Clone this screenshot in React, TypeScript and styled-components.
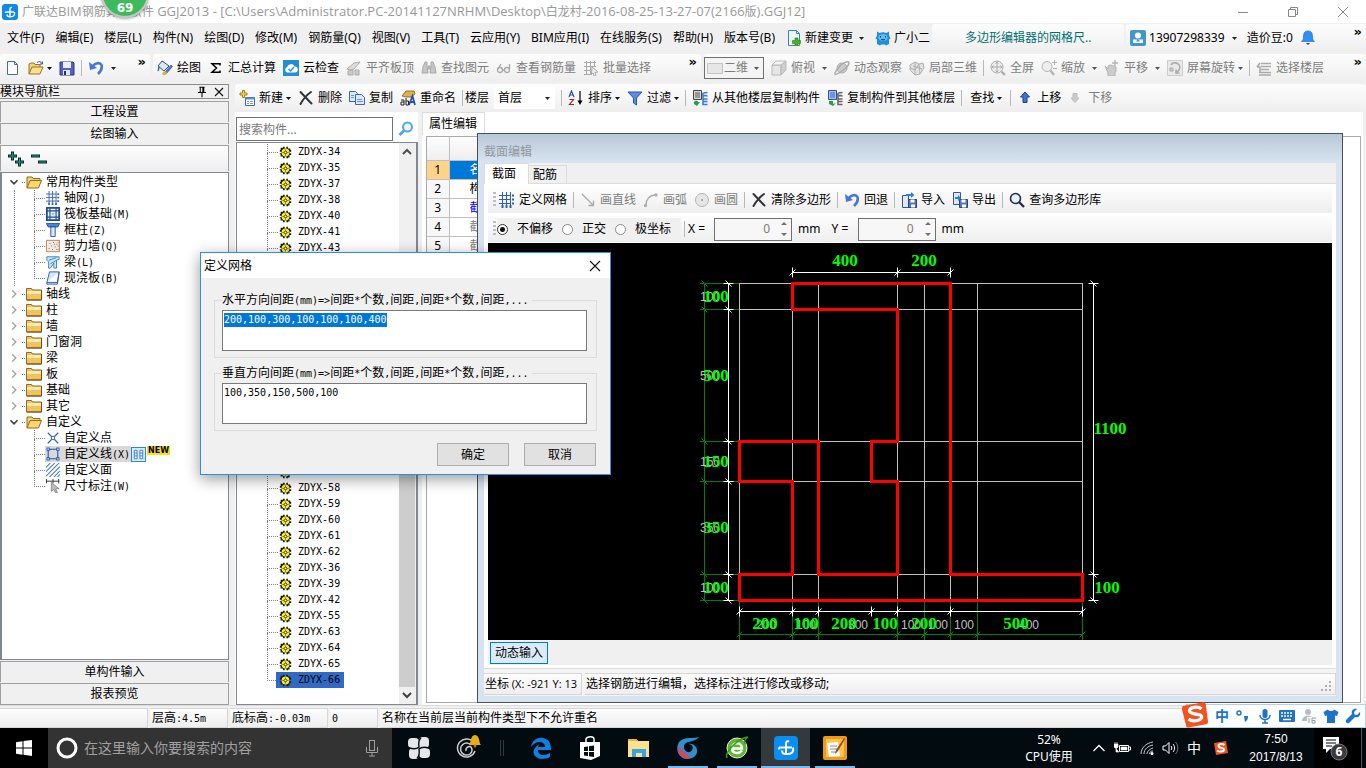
import React, { useEffect, useRef } from 'react';
import styled, { createGlobalStyle, css } from 'styled-components';

const ui = '"Noto Sans", "Noto Sans CJK SC", sans-serif';
const song = '"DejaVu Sans Mono", "Noto Sans CJK SC", monospace';

const GlobalStyle = createGlobalStyle`
  * { box-sizing: border-box; }
  html, body { margin: 0; background: #f0f0f0; }
  body { font: 12px/16px ${ui}; color: #000; overflow: hidden; }
  button, input, select, textarea { font: inherit; color: inherit; margin: 0; }
  button { background: none; border: 0; padding: 0; white-space: nowrap; }
  ul { list-style: none; margin: 0; padding: 0; }
  svg { display: block; flex: none; }
  a { color: inherit; text-decoration: none; }
`;

/* ---------- text with half-width Latin runs ---------- */

const Latin = styled.span<{ $size: number; $mono?: boolean }>`
  font-size: ${(p) => p.$size}px;
  font-family: ${(p) => (p.$mono ? song : '"Open Sans", sans-serif')};
`;

function Mixed({ text, size = 10, mono = true }: { text: string; size?: number; mono?: boolean }) {
  const runs = text.split(/([\x20-\x7e]+)/).filter(Boolean);
  return (
    <span>
      {runs.map((run, i) =>
        /^[\x20-\x7e]/.test(run) ? (
          <Latin key={i} $size={size} $mono={mono}>{run}</Latin>
        ) : (
          <React.Fragment key={i}>{run}</React.Fragment>
        )
      )}
    </span>
  );
}

/* ---------- icons ---------- */

const drawings: Record<string, React.ReactNode> = {
  app: (
    <>
      <rect width="16" height="16" rx="3" fill="#0f8ae6" />
      <path d="M10 3.500C8.500 3 8 4 8 5v7.500M3.500 8h8.500M3.500 8v1M12.500 8c.5 3-.5 5-4.500 4.800C5.500 12.800 5 11.500 5 10.500" fill="none" stroke="#fff" strokeWidth="1.400" />
    </>
  ),
  file: <path d="M2.500 1.500h7l3 3v10h-10zM9.500 1.500v3h3" fill="#fff" stroke="#4a6d8c" />,
  open: (
    <>
      <path d="M1 14V4l2-1h3l1 1.500h5V7" fill="#f3d27c" stroke="#9a7428" />
      <path d="M1 14l3-7h11l-3 7z" fill="#fbdf8c" stroke="#9a7428" />
      <path d="M9 2.500c2-1.500 4-1 5 1M14.500 1.500v2.500h-2.500" fill="none" stroke="#3b5b8a" />
    </>
  ),
  save: (
    <>
      <path d="M1 2h13l1 1v12H1z" fill="#5560c8" stroke="#2c3590" />
      <path d="M4 2h8v6H4z" fill="#eef" />
      <path d="M4 10h7v5H4z" fill="#dfe4fa" />
      <path d="M5 11h2v4H5z" fill="#333" />
    </>
  ),
  undo: (
    <>
      <path d="M5 6c2-3 7-4 8.500-1 1.200 3.500-1.500 7-3.500 9" fill="none" stroke="#4a76d4" strokeWidth="2.600" />
      <path d="M1 2l1 8 7-2z" fill="#4a76d4" />
    </>
  ),
  paint: (
    <>
      <path d="M1 6l4-5 7 5-5 5z" fill="#dfe7f2" stroke="#31527b" />
      <path d="M8 12l6-7 1.500 1.500-6 7z" fill="#4d7fc9" stroke="#25447a" strokeWidth=".6" />
      <path d="M5 14c2-3 4-3 5-1 0 2-4 3-5 1z" fill="#e2a93a" />
      <path d="M1 6c1 0 1 3 0 5" stroke="#2b66b9" fill="none" strokeWidth="1.500" />
    </>
  ),
  sigma: <path d="M12 5.500V3.800H4L8.500 8 4 12.200h8v-1.700" fill="none" stroke="#000" strokeWidth="1.500" />,
  cloud: (
    <>
      <rect width="16" height="16" fill="#1f8fd6" />
      <path d="M4 12.500a3 3 0 010-5.500 4 4 0 017.500-.500 3 3 0 01.500 6z" fill="#fff" />
      <path d="M5.500 9l2 2 3.500-4" fill="none" stroke="#1f8fd6" strokeWidth="1.300" />
    </>
  ),
  slab: (
    <>
      <path d="M1 9l7-6 6-1-6 7-4 1z" fill="#ddd" stroke="#aaa" />
      <path d="M2 11l5-1v5H2zM9 10h4v5H9z" fill="#ccc" stroke="#aaa" />
    </>
  ),
  binoc: (
    <g fill="#c6c6c6" stroke="#a8a8a8">
      <path d="M4 2h2v4l1 7H1l1-6zM10 2h2l2 5 1 6H9l1-7z" />
      <path d="M7 6h2v3H7z" />
    </g>
  ),
  glasses: (
    <g fill="none" stroke="#a8a8a8" strokeWidth="1.300">
      <circle cx="4" cy="10" r="2.500" />
      <circle cx="11" cy="10" r="2.500" />
      <path d="M6.500 10h2M2 9l3-5M13.500 9V4" />
    </g>
  ),
  batch: (
    <g fill="none" stroke="#aaa">
      <path d="M1 2.500h12M1 6.500h12M1 10.500h8M1 14.500h8M3.500 1v14M7.500 1v14M11.500 1v6" />
      <path d="M9 7l6 5-3 .5 1 3-2 .5-1-3-1.500 1z" fill="#eee" />
    </g>
  ),
  rect2d: <path d="M.5 3.500h15v10H.5z" fill="#e6e6e6" stroke="#c4c4c4" />,
  cube: (
    <g fill="#e6e6e6" stroke="#b8b8b8">
      <path d="M1 5h9v10H1z" />
      <path d="M1 5l4-4h10l-5 4z" fill="#f4f4f4" />
      <path d="M10 5l5-4v9l-5 5z" fill="#cfcfcf" />
    </g>
  ),
  orbit: (
    <g stroke="#aaa">
      <circle cx="8" cy="8" r="5" fill="#ccc" />
      <path d="M1 14c1 2 14-7 14-11 0-3-7 0-10 4s-5 6-4 7z" fill="none" strokeWidth="1.500" />
    </g>
  ),
  cubes: (
    <g fill="#e2e2e2" stroke="#b0b0b0">
      <path d="M1 5l5-3 4 2 4-1 1 5-4 6-5 1-5-5z" />
      <path d="M1 8l5 2 4-6M6 10v5M10 4l1 10M6 2l0 8M4 6l9 3" fill="none" />
    </g>
  ),
  full: (
    <g fill="none" stroke="#aaa">
      <circle cx="7" cy="7" r="6" fill="#eee" />
      <path d="M7 2v10M2 7h10M5.500 3.500L7 2l1.500 1.500M5.500 10.500L7 12l1.500-1.500M3.500 5.500L2 7l1.500 1.500M10.500 5.500L12 7l-1.500 1.500" />
      <path d="M11.500 11.500L15 15" strokeWidth="2.200" />
    </g>
  ),
  zoomer: (
    <g fill="none" stroke="#b4b4b4">
      <circle cx="6" cy="6.500" r="5" fill="#eee" />
      <path d="M9.500 10.500L13 15" strokeWidth="2.200" />
      <path d="M11 2.500h5M13.500 0v5M12 8.500h4" />
    </g>
  ),
  hand: (
    <g fill="#ccc" stroke="#b4b4b4">
      <path d="M1 6l3 3v-3l2-1 2 .5 2 .5 2 1v4l-1 2v3H4v-3z" />
      <path d="M11 0v6M8 3h6" fill="none" strokeWidth="1.400" />
    </g>
  ),
  rotate: (
    <g fill="none" stroke="#aaa">
      <path d="M.5.5h15v15H.5z" fill="#e9e9e9" stroke="#ccc" />
      <path d="M4 5a4.500 4.500 0 118 5l-3 3M9 9.500V13h3.500" strokeWidth="1.600" />
      <path d="M3 8h3v3H3z" fill="#ccc" />
    </g>
  ),
  floors: (
    <g fill="none" stroke="#aaa" strokeWidth="1.600">
      <path d="M5 3.500h10M5 6.500h10M5 9.500h8M3 12.500h12M3 15h12" />
      <path d="M1 7l3-4M1 7h3v6" />
    </g>
  ),
  create: (
    <>
      <path d="M3.500.5h2v2.500h2.500v2H5.500v2.500h-2V5H1V3h2.500z" fill="#f6d743" stroke="#a68312" />
      <path d="M6.500 7.500h9v8h-9z" fill="#fff" stroke="#3d66b0" />
      <path d="M6.500 7.500h9v2h-9z" fill="#5d8fe0" />
      <path d="M8 11.500h2M11 11.500h3M8 13.500h2M11 13.500h3" stroke="#7b9bd0" />
    </>
  ),
  del: (
    <path d="M2.500 2c3 3 7 7.500 11 11.500M13 2C10 4 5 9.500 2.500 14" fill="none" stroke="#33333c" strokeWidth="2" strokeLinecap="round" />
  ),
  copy: (
    <g fill="#dce8fb" stroke="#3a66b4">
      <path d="M.5 1.500h6l2 2v8h-8z" />
      <path d="M6.500 4.500h6l3 3v7h-9z" />
      <path d="M8 9.500h5M8 11.500h6M2 5.500h3M2 7.500h3" stroke="#6d93d2" />
    </g>
  ),
  rename: (
    <>
      <path d="M2 6l4-5h8l1 3-4 3H6z" fill="#e2b04c" stroke="#7d5a1b" strokeWidth=".8" />
      <path d="M9 15l3.500-9L15 15M10.500 12h4" fill="none" stroke="#2850a8" strokeWidth="1.800" />
      <path d="M1 10h3v5H1v-3h3M6 8v7h2.500v-4H6" fill="none" stroke="#222" />
    </>
  ),
  sort: (
    <>
      <path d="M1 7l2.500-6L6 7M2 5h3" fill="none" stroke="#2952a3" strokeWidth="1.200" />
      <path d="M1.500 9.500h4l-4 5h4.500" fill="none" stroke="#a32929" strokeWidth="1.200" />
      <path d="M12 1v12" stroke="#000" strokeWidth="1.200" />
      <path d="M9.500 10.500h5L12 15z" />
    </>
  ),
  filter: <path d="M1 2h14l-5.500 6v7l-3-2V8z" fill="#5d8be0" stroke="#2a55ac" />,
  copyFrom: (
    <>
      <path d="M1.500.5h8v9h-8z" fill="#d8d8d8" stroke="#444" />
      <path d="M3 3h5M3 5h5M3 7h5" stroke="#555" />
      <path d="M2 12c2-2 4-1 4 0h2l-3 4-3-2z" fill="#24a148" />
      <path d="M15.500 2.500c-5 0-5 1-4.500 3 3 0 4.500.5 4.500 0M11 5v4h4.500M11 9v5.500h4.500M11 11.500h4.500" fill="none" stroke="#3b78d6" strokeWidth="1.600" />
    </>
  ),
  copyTo: (
    <>
      <path d="M1.500.5h8v9h-8z" fill="#a9c6f2" stroke="#2b4f9a" />
      <path d="M3 3h5M3 5h5M3 7h5" stroke="#2b62bb" />
      <path d="M2 11l4 0 0 3 3-1-3 3-4-2z" fill="#24a148" />
      <path d="M15.500 2.500c-5 0-5 1-4.500 3 3 0 4.500.5 4.500 0M11 5v4h4.500M11 9v5.500h4.500M11 11.500h4.500" fill="none" stroke="#666" strokeWidth="1.600" />
    </>
  ),
  up: <path d="M8 2l4.500 5H10v5.500H6V7H3.500z" fill="#3e74dc" stroke="#1b3f94" />,
  down: <path d="M7 12.500l4-4.500H9V3.500H5V8H3z" fill="#ccc" stroke="#bbb" />,
  change: (
    <>
      <path d="M2.500.5h8l3 3v12h-11z" fill="#eaf5ff" stroke="#3a86b8" />
      <path d="M10.500.5v3h3" fill="none" stroke="#3a86b8" />
      <path d="M9 8h3v2.500h2.500v3H12V16H9v-2.500H6.500v-3H9z" fill="#4caf1f" stroke="#2c7d0c" strokeWidth=".6" />
    </>
  ),
  robot: (
    <>
      <path d="M2 1.500l2.500 1.500q3.500-1.500 7 0L14 1.500v4l1.500 3-1.500 1v4.500l-3 1.500-1.500-1h-3l-1.500 1-3-1.500V9.500l-1.500-1L2 5.500z" fill="#1f8fdc" />
      <ellipse cx="8" cy="7.500" rx="4.500" ry="3.300" fill="#5cc0fb" />
      <path d="M5.500 6v1.500M10.500 6v1.500M6 9.200c1 .8 3 .8 4 0" stroke="#0b3b66" fill="none" />
    </>
  ),
  account: (
    <>
      <rect width="16" height="16" rx="2" fill="#3f97cc" />
      <circle cx="8" cy="5.500" r="3" fill="#fff" />
      <path d="M3 13V9.500h10V13z" fill="#fff" />
      <path d="M8 8.500l2 3H6z" fill="#3f97cc" />
    </>
  ),
  bell: (
    <>
      <path d="M8 1c4 0 4.500 3 4.500 6 0 2 .5 3 2 4.500h-13C3 10 3.500 9 3.500 7c0-3 .5-6 4.500-6z" fill="#2f8ff5" stroke="#1262bd" strokeWidth=".6" />
      <path d="M6 13h4l-2 2z" fill="#124a8c" />
    </>
  ),
  grid: (
    <g stroke="#2f5fb3" fill="none">
      <path d="M0 3.500h12M0 7.500h12M0 11.500h12M3.500 0v13M7.500 0v13M11.500 0v13" />
      <path d="M13 3.500h2M13 7.500h2M13 11.500h2M3.500 13v3M7.500 13v3M11.500 13v3" strokeWidth="2" />
    </g>
  ),
  raft: (
    <>
      <rect x="1" y="1" width="14" height="14" fill="#eaf2fc" stroke="#1e4e8c" strokeWidth="2" />
      <path d="M4.500 4.500h7v7h-7zM4.500 1v3.500M11.500 1v3.500M4.500 11.500V15M11.500 11.500V15M1 4.500h3.500M1 11.500h3.500M11.500 4.500H15M11.500 11.500H15" fill="none" stroke="#1e4e8c" strokeWidth="1.300" />
      <path d="M6.500 6.500h3v3h-3z" fill="#a9c6ea" />
    </>
  ),
  column: (
    <>
      <path d="M.5.500h15l-2 4h-11z" fill="#4c84d8" stroke="#1d4795" />
      <path d="M5.500 4.500h5v11h-5z" fill="#dce9fb" stroke="#1d4795" />
    </>
  ),
  shear: (
    <>
      <path d="M.5 1.500h15v13H.5z" fill="#f1e9e2" stroke="#b07a52" />
      <path d="M4 5h1M8 4h1M12 6h1M6 8h1M10 9h1M3 11h1M7 12h1M12 12h1M9 6h1" stroke="#555" />
      <path d="M14 3v10" stroke="#e18a35" strokeDasharray="2 2" />
    </>
  ),
  beam: (
    <>
      <path d="M1 2h14v3l-3 1v9H9V9L5 15H3V8L1 6z" fill="#cfe6fb" stroke="#2e7cc0" />
      <path d="M3 6l9-3M5 10l7-4" stroke="#2e7cc0" />
    </>
  ),
  plate: <path d="M4 1h11l-2 12H1zM1 13v2h12l2-14" fill="#d8e8fd" stroke="#1f4fa8" />,
  folder: (
    <>
      <path d="M.5 2.500h5l1 1.500h9v10H.5z" fill="#f2c35a" stroke="#8c6a2a" />
      <path d="M1 5h14v3H1z" fill="#fde9ad" />
      <path d="M15.500 4v10H1" fill="none" stroke="#6b4e18" />
    </>
  ),
  folderOpen: (
    <>
      <path d="M1 14V3h5l1 1.500h7V7" fill="#f3d27c" stroke="#8c6a2a" />
      <path d="M1 14l3-7.500h11.500L12.500 14z" fill="#fbd868" stroke="#8c6a2a" />
    </>
  ),
  point: (
    <>
      <path d="M2 2l12 12M14 2L2 14" stroke="#2f5fb3" strokeWidth="1.300" />
      <circle cx="8" cy="8" r="2" fill="#fff" stroke="#2f5fb3" />
    </>
  ),
  polyline: (
    <g fill="none" stroke="#1f4fa8" strokeWidth="1.200">
      <path d="M2.500 2.500h11v11h-11z" />
      <path d="M1 1h3v3H1zM12 1h3v3h-3zM1 12h3v3H1zM12 12h3v3h-3z" fill="#9dc0f0" strokeWidth=".8" />
    </g>
  ),
  hatch: <path d="M0 5l5-5M0 10L10 0M0 15L15 0M4 16L16 4M9 16l7-7M13 16l3-3" stroke="#3b72d0" strokeWidth="1.200" />,
  dimension: (
    <>
      <path d="M0 2.500h15M.5 0v5M8 0v5M14.500 0v5" stroke="#222" fill="none" />
      <path d="M6 4l9 7-4 .5 2 4-2 .5-2-4-3 2z" fill="#bbb" stroke="#666" strokeWidth=".7" />
    </>
  ),
  table: (
    <>
      <rect x=".5" y=".5" width="15" height="15" fill="#d7ecff" stroke="#2f7cc4" />
      <path d="M3.500 3.500h3v9h-3zM9.500 3.500h3v9h-3zM3.500 6.500h3M3.500 9.500h3M9.500 6.500h3M9.500 9.500h3" fill="#fff" stroke="#2f7cc4" />
    </>
  ),
  gear: (
    <>
      <path d="M5 1h2v2h2V1h2v2h3v2h1v2h-2v2h2v2h-2v3h-2v1H9v-2H7v2H5v-2H2v-3H1V9h2V7H1V5h1V2h3z" fill="#1a1a10" />
      <circle cx="8" cy="8" r="4.800" fill="#f4ee2a" />
      <path d="M8 4v8M4 8h8" stroke="#6b6810" strokeWidth=".8" />
      <circle cx="8" cy="8" r="1.600" fill="#fff" stroke="#222" />
    </>
  ),
  find: (
    <g fill="none" stroke="#5aa5e0">
      <circle cx="9.500" cy="6" r="4.500" strokeWidth="2" fill="#eaf6ff" />
      <path d="M6 9.500L1.500 14" strokeWidth="3" />
    </g>
  ),
  query: (
    <g fill="none" stroke="#20304a">
      <circle cx="6.500" cy="6.500" r="5" strokeWidth="1.600" fill="#e5f1fc" />
      <path d="M10 10l5 5" strokeWidth="2.400" />
    </g>
  ),
  line: <path d="M2 2l11 11M8.500 13.500h5v-5" fill="none" stroke="#aaa" strokeWidth="1.300" />,
  arc: (
    <g fill="none" stroke="#aaa" strokeWidth="1.300">
      <path d="M3 13C3 7 7 3 12 3" />
      <circle cx="2.500" cy="13.500" r="1" />
      <circle cx="13" cy="3" r="1" />
    </g>
  ),
  circle: (
    <>
      <circle cx="8" cy="8" r="6.500" fill="#e6e6e6" stroke="#b4b4b4" />
      <circle cx="8" cy="8" r="1" fill="#999" />
    </>
  ),
  importIcon: (
    <>
      <path d="M1.500 3.500h6v12h-6z" fill="#dfe8f7" stroke="#34568f" />
      <path d="M7.500 7.500h8v8h-8z" fill="#5374c2" stroke="#27427f" />
      <path d="M9.500 7.500h4v3h-4zM10 12.500h4v3h-4z" fill="#fff" />
      <path d="M5 2h5V0l3.500 3L10 6V4H5z" fill="#2f7fd6" />
    </>
  ),
  exportIcon: (
    <>
      <path d="M1.500.500h7v12h-7z" fill="#dfe8f7" stroke="#34568f" />
      <path d="M7.500 7.500h8v8h-8z" fill="#5374c2" stroke="#27427f" />
      <path d="M9.500 7.500h4v3h-4zM10 12.500h4v3h-4z" fill="#fff" />
      <path d="M3 5h3V3l3 3-3 3V7H3z" fill="#2f7fd6" />
    </>
  ),
  chevDown: <path d="M4 6l4 4 4-4" fill="none" stroke="#404040" strokeWidth="2" />,
  chevUp: <path d="M4 10l4-4 4 4" fill="none" stroke="#505050" strokeWidth="2" />,
  chevRight: <path d="M6 4l4 4-4 4" fill="none" stroke="#a0a0a0" strokeWidth="1.600" />,
  plusPlus: (
    <g stroke="#0b2b2b" strokeWidth="3">
      <path d="M0 5h9M4.500.5v9M7 11h9M11.500 6.500v9" />
      <path d="M1 5h7M4.500 1.500v7M8 11h7M11.500 7.500v7" stroke="#1a9c8e" strokeWidth="1" />
    </g>
  ),
  minusMinus: (
    <g stroke="#0b2b2b" strokeWidth="3">
      <path d="M0 5h9M7 11h9" />
      <path d="M1 5h7M8 11h7" stroke="#1a9c8e" strokeWidth="1" />
    </g>
  ),
  pin: <path d="M5 2.500h6M6 2v6M10 2v6M9 2v6M3.500 8.500h9M8 9v5" fill="none" stroke="#000" strokeWidth="1.200" />,
  close: <path d="M4 4l8 8M12 4l-8 8" fill="none" stroke="#111" strokeWidth="1.100" />,
};

function Icon({ name, size = 16 }: { name: string; size?: number }) {
  return (
    <svg width={size} height={size} viewBox="0 0 16 16" aria-hidden="true">
      {drawings[name]}
    </svg>
  );
}

const Caret = ({ color = '#222' }: { color?: string }) => (
  <svg width="5" height="3" viewBox="0 0 5 3" aria-hidden="true">
    <path d="M0 0h5L2.500 3z" fill={color} />
  </svg>
);

/* ---------- frame ---------- */

const Screen = styled.div`
  position: relative;
  display: flex;
  flex-direction: column;
  min-height: 100vh;
  background: #f0f0f0;
  overflow: hidden;
`;

const TitleBar = styled.header`
  display: flex;
  align-items: center;
  gap: 4px;
  height: 23px;
  padding-left: 2px;
  background: #fff;
  color: #999;
  white-space: nowrap;
`;

const TitleText = styled.div`
  flex: 1;
`;

const WindowButton = styled.button`
  display: grid;
  place-items: center;
  width: 46px;
  height: 20px;
`;

const SpeedBall = styled.div`
  position: absolute;
  left: 101px;
  top: -30px;
  width: 48px;
  height: 48px;
  padding-top: 28px;
  border: 2px solid #c3c8c4;
  border-radius: 24px;
  background: #3dbb5c;
  color: #fff;
  font: bold 12px/16px "DejaVu Sans", sans-serif;
  text-align: center;
  box-shadow: 0 1px 3px rgba(0, 0, 0, 0.35);
`;

const barFace = css`
  background: linear-gradient(#fdfdfd, #eeeeee);
`;

const MenuRow = styled.div`
  display: flex;
  gap: 2px;
  height: 31px;
  padding: 1px 0 2px;
`;

const Menu = styled.nav`
  flex: 0 0 929px;
  display: flex;
  align-items: center;
  gap: 11px;
  padding-left: 7px;
`;

const MenuButton = styled.button`
  display: flex;
  align-items: center;
  gap: 3px;
`;

const ChangeButton = styled(MenuButton)`
  svg:last-child { margin: 0 0 0 3px; }
`;

const News = styled.div`
  flex: 0 0 192px;
  display: flex;
  align-items: center;
  padding-left: 33px;
  border-radius: 3px;
  color: #007070;
  ${barFace}
`;

const Account = styled.div`
  flex: 1;
  display: flex;
  align-items: center;
  gap: 7px;
  padding: 0 4px;
  border-radius: 3px;
  ${barFace}
`;

const ToolRow = styled.div`
  display: flex;
  height: 30px;
  padding-bottom: 2px;
  gap: 3px;
`;

const Toolbar = styled.div<{ $basis?: number; $start: number }>`
  flex: ${(p) => (p.$basis ? `0 0 ${p.$basis}px` : '1 1 0')};
  min-width: 0;
  display: flex;
  align-items: center;
  gap: 7px;
  padding: 0 4px 0 ${(p) => p.$start}px;
  border-radius: 3px;
  overflow: hidden;
  ${barFace}
`;

const Tool = styled.button<{ $off?: boolean; $pad?: boolean }>`
  display: flex;
  align-items: center;
  gap: 4px;
  padding: ${(p) => (p.$pad ? '0 2px' : '0')};
  color: ${(p) => (p.$off ? '#7d7d7d' : '#000')};
  svg + svg, span + svg { margin-left: -1px; }
`;

const Sep = styled.i`
  flex: none;
  width: 1px;
  height: 16px;
  margin: 0 -1px;
  background: #b8b8b8;
`;

const Spacer = styled.div`
  flex: 1;
`;

const More = styled.button`
  align-self: flex-start;
  height: 12px;
  margin-top: 2px;
  font: bold 13px/12px "DejaVu Sans", sans-serif;
`;

const Combo = styled.div<{ $w: number; $boxed?: boolean }>`
  flex: none;
  display: flex;
  align-items: center;
  width: ${(p) => p.$w}px;
  height: 22px;
  padding: 0 4px 0 2px;
  background: ${(p) => (p.$boxed ? '#f4f4f4' : '#fff')};
  border: 1px solid ${(p) => (p.$boxed ? '#707070' : '#fff')};
  color: ${(p) => (p.$boxed ? '#7d7d7d' : '#000')};
  select {
    flex: 1;
    min-width: 0;
    padding: 0 1px;
    border: 0;
    background: none;
    appearance: none;
    outline: none;
  }
`;

const FloorLabel = styled.label`
  display: flex;
  align-items: center;
  gap: 5px;
  margin-left: -4px;
`;

const Body = styled.main`
  flex: 1;
  display: flex;
  gap: 6px;
  min-height: 0;
`;

/* ---------- navigation panel ---------- */

const NavPanel = styled.aside`
  flex: 0 0 229px;
  display: flex;
  flex-direction: column;
  gap: 1px;
`;

const NavHead = styled.div`
  display: flex;
  align-items: center;
  gap: 2px;
  height: 15px;
  margin-bottom: 1px;
  padding-right: 1px;
  border: solid #8a8a8a;
  border-width: 1px 1px 1px 0;
`;

const NavSection = styled.button`
  height: 21px;
  border: solid #a0a0a0;
  border-width: 1px 1px 0 1px;
  background: #f0f0f0;
  &:last-child { height: 22px; border-bottom-width: 1px; }
`;

const NavTools = styled.div`
  display: flex;
  align-items: center;
  gap: 7px;
  height: 26px;
  padding-left: 7px;
  border: solid #a0a0a0;
  border-width: 1px 1px 0 1px;
  ${barFace}
`;

const Tree = styled.ul`
  flex: 1;
  padding: 1px 0 0 1px;
  background: #fff;
  border: solid #828790;
  border-width: 1px 1px 1px 2px;
`;

const Row = styled.div`
  display: flex;
  align-items: center;
  height: 16px;
  white-space: nowrap;
`;

const Chevron = styled.button`
  display: grid;
  place-items: center;
  width: 16px;
  height: 16px;
  margin-left: 3px;
`;

const Stub = styled.i`
  width: 3px;
  border-top: 1px dotted #808080;
`;

const Branch = styled.ul<{ $trunk?: boolean }>`
  margin-left: 11px;
  padding-left: 19px;
  border-left: 1px ${(p) => (p.$trunk ? 'dotted #808080' : 'solid transparent')};
`;

const Elbow = styled.i<{ $last?: boolean }>`
  width: 11px;
  height: 16px;
  &::before, &::after {
    content: "";
    display: block;
    height: 8px;
    border-left: 1px dotted #808080;
  }
  &::before { border-bottom: 1px dotted #808080; }
  &::after { border-left-color: ${(p) => (p.$last ? 'transparent' : '#808080')}; }
`;

const NodeText = styled.span<{ $picked?: boolean }>`
  display: flex;
  align-items: center;
  gap: 4px;
  height: 16px;
  padding: 0 1px;
  background: ${(p) => (p.$picked ? '#d9d9d9' : 'none')};
`;

const NewTag = styled.b`
  align-self: flex-start;
  height: 9px;
  margin-left: 1px;
  padding: 0 1px;
  background: #ffdf1a;
  font: bold 8px/9px "DejaVu Sans", sans-serif;
`;

/* ---------- work area ---------- */

const Work = styled.section`
  flex: 1;
  min-width: 0;
  display: flex;
  flex-direction: column;
`;

const WorkTools = styled.div`
  display: flex;
  height: 28px;
`;

const WorkSplit = styled.div`
  flex: 1;
  display: flex;
  gap: 4px;
  padding-right: 3px;
  min-height: 0;
`;

const ListPane = styled.div`
  flex: 0 0 183px;
  display: flex;
  flex-direction: column;
  padding: 3px 0 0 1px;
  background: #fff;
`;

const SearchRow = styled.div`
  display: flex;
  align-items: center;
  height: 27px;
  padding: 2px 0 1px;
  input {
    width: 157px;
    height: 24px;
    padding: 0 2px;
    border: 1px solid #6f7377;
    outline: none;
    &::placeholder { color: #777; opacity: 1; }
  }
  button {
    flex: 1;
    display: grid;
    place-items: center;
  }
`;

const ListBox = styled.div`
  flex: 1;
  display: flex;
  justify-content: space-between;
  border: 1px solid #828790;
  border-right-width: 2px;
  background: #fff;
`;

const ListRows = styled.ul`
  padding: 1px 0 0 30px;
  font-family: ${song};
`;

const ListItem = styled.li`
  display: flex;
  align-items: center;
  height: 16px;
`;

const ItemFace = styled.span<{ $on?: boolean }>`
  display: flex;
  align-items: center;
  gap: 6px;
  height: 16px;
  margin-left: -2px;
  padding: 0 4px 0 3px;
  font-size: 10px;
  background: ${(p) => (p.$on ? '#316ac5' : 'none')};
`;

const Scroll = styled.div`
  display: flex;
  flex-direction: column;
  width: 17px;
  padding: 1px 1px 1px 0;
  background: #f0f0f0;
`;

const Track = styled.div`
  flex: 1;
  padding-top: 110px;
  display: flex;
`;

const Thumb = styled.div`
  flex: 1;
  background: #cdcdcd;
`;

const PropPane = styled.div`
  flex: 1;
  min-width: 0;
  display: flex;
  flex-direction: column;
  background: #fff;
`;

const PropTab = styled.button`
  align-self: flex-start;
  height: 23px;
  padding: 0 7px 0 6px;
  background: #fff;
  border: 1px solid #dcdcdc;
  border-bottom: 0;
`;

const PropBox = styled.div`
  flex: 1;
  margin: 1px 2px 2px 4px;
  border: 1px solid #a8abb0;
  background: #fff;
`;

const PropTable = styled.table`
  width: 50%;
  border-collapse: collapse;
  table-layout: fixed;
  col:first-child { width: 22px; }
  th, td {
    height: 19px;
    padding: 0;
    border: solid #c0c0c0;
    border-width: 0 1px 1px 0;
    font-weight: normal;
    line-height: 18px;
  }
  thead th { height: 23px; ${barFace} }
  tbody th { ${barFace} }
  td { padding-left: 20px; }
`;

const PropRow = styled.tr<{ $tone: 'picked' | 'plain' | 'blue' | 'grey' }>`
  && th { background: ${(p) => (p.$tone === 'picked' ? '#ffd48a' : '#f7f7f7')}; }
  td {
    background: ${(p) => (p.$tone === 'picked' ? '#0078d7' : '#fff')};
    color: ${(p) => ({ picked: '#fff', plain: '#000', blue: '#0000ff', grey: '#808080' })[p.$tone]};
  }
`;

/* ---------- section editor ---------- */

const Editor = styled.section`
  position: absolute;
  left: 477px;
  top: 133px;
  right: 23px;
  bottom: 65px;
  display: flex;
  flex-direction: column;
  padding: 0 6px 6px;
  border: 1px solid #4b5057;
  background: linear-gradient(#b9c8d8, #d7e3f0 28px, #d7e3f0);
`;

const EditorTitle = styled.h2`
  height: 31px;
  margin: 0;
  padding-top: 9px;
  font-size: 12px;
  font-weight: normal;
  line-height: 18px;
  color: #8f979f;
`;

const Tabs = styled.div`
  display: flex;
  align-items: flex-end;
  height: 21px;
  background: #f0f0f0;
  border-bottom: 1px solid #dcdcdc;
`;

const Tab = styled.button<{ $on?: boolean }>`
  height: ${(p) => (p.$on ? 21 : 18)}px;
  margin-bottom: ${(p) => (p.$on ? -1 : 0)}px;
  padding: ${(p) => (p.$on ? '0 12px 0 7px' : '0 9px 0 4px')};
  background: ${(p) => (p.$on ? '#fff' : '#f0f0f0')};
  border: solid #dcdcdc;
  border-width: 1px 1px 0 ${(p) => (p.$on ? 1 : 0)}px;
`;

const Page = styled.div`
  flex: 1;
  display: flex;
  flex-direction: column;
  padding: 3px 4px;
  background: #fff;
  border-bottom: 1px solid #dcdcdc;
`;

const EditorTools = styled.div`
  flex: none;
  display: flex;
  align-items: center;
  gap: 7px;
  height: 26px;
  margin-bottom: 3px;
  padding-left: 5px;
  white-space: nowrap;
  ${barFace}
  & + & { margin-bottom: 1px; gap: 4px; }
`;

const Grip = styled.i`
  width: 3px;
  height: 16px;
  margin-right: -4px;
  background: repeating-linear-gradient(#bdbdbd 0 2px, transparent 2px 4px);
`;

const Modes = styled.div`
  display: flex;
  gap: 9px;
  align-items: center;
  height: 22px;
  margin-left: 1px;
  padding: 0 10px 0 0;
  background: #f0f0f0;
  label { display: flex; align-items: center; gap: 9px; }
  input {
    appearance: none;
    width: 11px;
    height: 11px;
    border: 1px solid #8a8a8a;
    border-radius: 6px;
    background: #fff;
  }
  input:checked {
    border-color: #333;
    background: radial-gradient(#111 0 2px, #fff 3px);
  }
`;

const Offset = styled.label`
  display: flex;
  align-items: center;
  gap: 6px;
  margin-right: 7px;
`;

const OffsetName = styled.span`
  min-width: 20px;
`;

const Spin = styled.span`
  display: flex;
  align-items: center;
  width: 78px;
  height: 23px;
  padding-right: 4px;
  border: 1px solid #707070;
  background: #f7f7f7;
  input {
    flex: 1;
    min-width: 0;
    padding: 0 11px 0 0;
    border: 0;
    background: none;
    color: #7d7d7d;
    text-align: right;
  }
`;

const Canvas = styled.div`
  flex: 1;
  min-height: 0;
  display: flex;
  background: #000;
  svg { flex: 1; min-width: 0; }
`;

const CanvasFoot = styled.div`
  flex: none;
  height: 25px;
  padding: 2px;
  background: #f0f0f0;
`;

const InputToggle = styled.button`
  height: 22px;
  padding: 0 4px;
  border: 1px solid #0078d7;
  background: #dcebf8;
`;

const statusCell = css`
  display: flex;
  align-items: center;
  border: solid #d6d6d6;
  border-width: 1px 1px 1px 0;
  white-space: nowrap;
  overflow: hidden;
  ${barFace}
`;

const EditorStatus = styled.footer`
  flex: none;
  display: flex;
  gap: 3px;
  height: 27px;
  padding: 4px 0 1px;
  background: #f4f4f4;
  div { ${statusCell} padding-left: 1px; }
  div:first-child { flex: 0 0 98px; }
  div:last-child { flex: 1; }
`;

const SizeGrip = styled.svg`
  margin: 6px 2px 0 auto;
`;

/* ---------- dialog ---------- */

const Dialog = styled.form`
  position: absolute;
  left: 200px;
  top: 252px;
  width: 411px;
  border: 1px solid #2d8cf0;
  background: #f0f0f0;
  box-shadow: 0 4px 14px rgba(0, 0, 0, 0.4);
`;

const DialogTitle = styled.div`
  display: flex;
  align-items: center;
  justify-content: space-between;
  height: 25px;
  margin-bottom: 14px;
  padding: 0 7px 0 3px;
  background: #fff;
`;

const Group = styled.fieldset`
  height: 66px;
  margin: 0 13px 7px;
  padding: 1px 9px 0 7px;
  border: 1px solid #dcdcdc;
  legend {
    padding: 0 4px 0 0;
    white-space: nowrap;
  }
  textarea {
    display: block;
    width: 100%;
    height: 41px;
    padding: 2px 1px;
    border: 1px solid #7a7a7a;
    outline: none;
    resize: none;
    overflow: hidden;
    background: #fff;
    font: 10px/14px ${song};
    &::selection { background: #0078d7; color: #fff; }
  }
`;

const DialogButtons = styled.div`
  display: flex;
  justify-content: flex-end;
  gap: 15px;
  padding: 5px 14px 8px 0;
  button {
    width: 72px;
    height: 23px;
    border: 1px solid #adadad;
    background: #e1e1e1;
  }
`;

/* ---------- status, input method, taskbar ---------- */

const AppStatus = styled.footer`
  display: flex;
  gap: 2px;
  height: 23px;
  padding-top: 2px;
  border-top: 1px solid #dcdcdc;
`;

const StatusCell = styled.div<{ $w?: number }>`
  flex: ${(p) => (p.$w ? `0 0 ${p.$w}px` : '1')};
  padding-left: 2px;
  ${statusCell}
`;

const ImeBar = styled.div`
  position: absolute;
  right: 0;
  bottom: 40px;
  display: flex;
  align-items: center;
  gap: 6px;
  width: 180px;
  height: 24px;
  padding-left: 28px;
  border: 1px solid #b9cfe3;
  background: #fdfeff;
  color: #1e73c8;
  font-weight: bold;
  font-size: 14px;
`;

const ImeLogo = styled.svg`
  position: absolute;
  left: -6px;
  top: -4px;
`;

const TaskBar = styled.footer`
  display: flex;
  align-items: stretch;
  height: 40px;
  background: #020b0f;
  color: #fff;
`;

const Start = styled.button`
  width: 48px;
  display: grid;
  place-items: center;
  background: #000;
`;

const TaskSearch = styled.label`
  display: flex;
  align-items: center;
  gap: 6px;
  width: 344px;
  padding: 0 13px 0 8px;
  background: #333;
  input {
    flex: 1;
    min-width: 0;
    padding: 0;
    border: 0;
    background: none;
    font-size: 14px;
    line-height: 20px;
    outline: none;
    &::placeholder { color: #a0a0a0; opacity: 1; }
  }
`;

const TaskApps = styled.div`
  flex: 1;
  display: flex;
  padding-left: 2px;
`;

const TaskApp = styled.button<{ $state?: 'open' | 'active' }>`
  width: 49px;
  display: grid;
  place-items: center;
  background: ${(p) => (p.$state === 'active' ? '#33393c' : 'none')};
  box-shadow: ${(p) => (p.$state === 'active' ? 'inset 0 -2px #76b9ed' : 'none')};
  svg { grid-area: 1 / 1; }
  &::after {
    content: "";
    grid-area: 1 / 1;
    align-self: end;
    width: 40px;
    height: 2px;
    background: ${(p) => (p.$state ? '#76b9ed' : 'none')};
  }
`;

const TaskSep = styled.i`
  align-self: center;
  width: 4px;
  height: 16px;
  margin: 0 12px 0 8px;
  border: solid #33393c;
  border-width: 0 1px;
`;

const Cpu = styled.div`
  width: 60px;
  padding-top: 3px;
  text-align: center;
  line-height: 17px;
`;

const Tray = styled.div`
  display: flex;
  align-items: center;
  gap: 8px;
  margin-left: 13px;
  font-size: 14px;
`;

const TrayMark = styled.svg`
  margin-left: 4px;
`;

const Clock = styled.div`
  width: 76px;
  margin-left: 9px;
  padding-top: 2px;
  text-align: center;
  line-height: 18px;
  font-family: "Liberation Sans", sans-serif;
`;

const Notice = styled.button`
  display: grid;
  place-items: center;
  width: 48px;
  margin-right: 4px;
  padding-right: 4px;
  border-right: 1px solid #555;
  background: #000;
`;

/* ---------- data ---------- */

const menus = ['文件(F)', '编辑(E)', '楼层(L)', '构件(N)', '绘图(D)', '修改(M)', '钢筋量(Q)', '视图(V)', '工具(T)', '云应用(Y)', 'BIM应用(I)', '在线服务(S)', '帮助(H)', '版本号(B)'];

const commonTypes: [string, string][] = [
  ['grid', '轴网(J)'], ['raft', '筏板基础(M)'], ['column', '框柱(Z)'],
  ['shear', '剪力墙(Q)'], ['beam', '梁(L)'], ['plate', '现浇板(B)'],
];
const closedTypes = ['轴线', '柱', '墙', '门窗洞', '梁', '板', '基础', '其它'];
const customTypes: [string, string][] = [
  ['point', '自定义点'], ['polyline', '自定义线(X)'], ['hatch', '自定义面'], ['dimension', '尺寸标注(W)'],
];

const members = [34, 35, 37, 38, 40, 41, 43, 33, 44, 45, 46, 47, 48, 49, 50, 51, 52, 53, 54, 56, 57, 58, 59, 60, 61, 62, 36, 39, 42, 55, 63, 64, 65, 66];

const props: ['picked' | 'plain' | 'blue' | 'grey', string][] = [
  ['picked', '名称'], ['plain', '构件类型'], ['blue', '截面形状'], ['grey', '截面宽度'], ['grey', '截面高度'],
];

/* ---------- drawing ---------- */

const gx = [739.5, 792.5, 818.5, 897.5, 924.5, 950.5, 977.5, 1082.5];
const gy = [283.5, 309.5, 441.5, 481.5, 574.5, 600.5];
const dimX = [739.5, 792.5, 818.5, 871.5, 897.5, 950.5, 1082.5];

const hTick = (x: number, y: number, r = 5) => `M${x} ${y - r}v${2 * r}M${x - 3} ${y + 3}l6-6`;
const vTick = (x: number, y: number, r = 5) => `M${x - r} ${y}h${2 * r}M${x - 3} ${y - 3}l6 6`;

const green: [number, number, string][] = [
  [845, 266, '400'], [924, 266, '200'],
  [716, 302, '100'], [716, 381, '500'], [716, 467, '150'], [716, 533, '350'], [716, 593, '100'],
  [765, 629, '200'], [806, 629, '100'], [844, 629, '200'], [885, 629, '100'], [924, 629, '200'], [1016, 629, '500'],
  [1110, 434, '1100'], [1107, 593, '100'],
];
const grey: [number, number, string][] = [
  [710, 301, '100'], [710, 380, '500'], [710, 466, '150'], [710, 532, '350'], [710, 592, '100'],
  [766, 629, '200'], [806, 629, '100'], [858, 629, '300'], [911, 629, '100'], [938, 629, '100'], [964, 629, '100'], [1029, 629, '400'],
];

function SectionDrawing() {
  return (
    <svg viewBox="488 243 844 397" role="img" aria-label="截面">
      <path
        d={gx.map((x) => `M${x} 283V600`).join('') + gy.map((y) => `M739 ${y}H1082`).join('')}
        stroke="#c0c0c0"
      />
      <path
        d={'M704.5 283V601M739 634.5H1083' + gy.map((y) => `M700 ${y}H739` + vTick(704.5, y, 3)).join('') + gx.map((x) => `M${x} 601V640` + hTick(x, 634.5, 3)).join('')}
        stroke="#008000"
      />
      <path
        d={
          'M792 272.5H951M728.5 283V601M1093.5 283V601M739 611.5H1083' +
          [792.5, 897.5, 950.5].map((x) => hTick(x, 272.5)).join('') +
          gy.map((y) => vTick(728.5, y)).join('') +
          [283.5, 574.5, 600.5].map((y) => vTick(1093.5, y)).join('') +
          dimX.map((x) => hTick(x, 611.5)).join('')
        }
        stroke="#fff"
      />
      <path
        d="M792.5 283.5H950.5V574.5H1082.5V600.5H739.5V574.5H792.5V481.5H739.5V441.5H818.5V574.5H897.5V481.5H871.5V441.5H897.5V309.5H792.5Z"
        fill="none"
        stroke="#f00"
        strokeWidth="3"
      />
      <g fill="#c0c0c0" fontFamily="Liberation Sans, sans-serif" fontSize="12" textAnchor="middle">
        {grey.map(([x, y, t], i) => <text key={i} x={x} y={y}>{t}</text>)}
      </g>
      <g fill="#0f0" fontFamily="Liberation Serif, serif" fontSize="17" fontWeight="bold" textAnchor="middle">
        {green.map(([x, y, t], i) => <text key={i} x={x} y={y}>{t}</text>)}
      </g>
    </svg>
  );
}

/* ---------- parts ---------- */

function ToolButton({ icon, text, off, caret, pad }: { icon?: string; text?: string; off?: boolean; caret?: boolean; pad?: boolean }) {
  return (
    <Tool type="button" $off={off} $pad={pad} aria-label={text || icon}>
      {icon && <Icon name={icon} />}
      {text && <span>{text}</span>}
      {caret && <Caret color={off ? '#555' : '#111'} />}
    </Tool>
  );
}

function Folder({ name, open, children }: { name: string; open?: boolean; children?: React.ReactNode }) {
  return (
    <li>
      <Row>
        <Chevron type="button" aria-label={name}><Icon name={open ? 'chevDown' : 'chevRight'} size={14} /></Chevron>
        <Stub />
        <NodeText><Icon name={open ? 'folderOpen' : 'folder'} />{name}</NodeText>
      </Row>
      {children}
    </li>
  );
}

function SpinBox({ name }: { name: string }) {
  return (
    <Offset>
      <OffsetName>{name} =</OffsetName>
      <Spin>
        <input defaultValue="0" />
        <svg width="6" height="16" viewBox="0 0 6 16"><path d="M0 4h6L3 1zM0 12h6l-3 3z" fill="#707070" /></svg>
      </Spin>
      mm
    </Offset>
  );
}

function GridDialog() {
  const first = useRef<HTMLTextAreaElement>(null);
  useEffect(() => {
    first.current?.focus();
    first.current?.select();
  }, []);
  return (
    <Dialog onSubmit={(e) => e.preventDefault()}>
      <DialogTitle>
        定义网格
        <button type="button" aria-label="关闭">
          <svg width="16" height="16" viewBox="0 0 16 16"><path d="M3 3l10 10M13 3L3 13" stroke="#111" strokeWidth="1.100" /></svg>
        </button>
      </DialogTitle>
      <Group>
        <legend><label htmlFor="hgap"><Mixed text="水平方向间距(mm)=>间距*个数,间距,间距*个数,间距,..." /></label></legend>
        <textarea id="hgap" ref={first} spellCheck={false} defaultValue="200,100,300,100,100,100,400" />
      </Group>
      <Group>
        <legend><label htmlFor="vgap"><Mixed text="垂直方向间距(mm)=>间距*个数,间距,间距*个数,间距,..." /></label></legend>
        <textarea id="vgap" spellCheck={false} defaultValue="100,350,150,500,100" />
      </Group>
      <DialogButtons>
        <button type="submit">确定</button>
        <button type="button">取消</button>
      </DialogButtons>
    </Dialog>
  );
}

function SectionEditor() {
  return (
    <Editor>
      <EditorTitle>截面编辑</EditorTitle>
      <Tabs>
        <Tab type="button" $on>截面</Tab>
        <Tab type="button">配筋</Tab>
      </Tabs>
      <Page>
        <EditorTools>
          <Grip />
          <ToolButton icon="grid" text="定义网格" />
          <Sep />
          <ToolButton icon="line" text="画直线" off />
          <ToolButton icon="arc" text="画弧" off />
          <ToolButton icon="circle" text="画圆" off />
          <Sep />
          <ToolButton icon="del" text="清除多边形" />
          <Sep />
          <ToolButton icon="undo" text="回退" />
          <Sep />
          <ToolButton icon="importIcon" text="导入" />
          <ToolButton icon="exportIcon" text="导出" />
          <Sep />
          <ToolButton icon="query" text="查询多边形库" />
        </EditorTools>
        <EditorTools>
          <Grip />
          <Modes>
            <label><input type="radio" name="mode" defaultChecked />不偏移</label>
            <label><input type="radio" name="mode" />正交</label>
            <label><input type="radio" name="mode" />极坐标</label>
          </Modes>
          <Sep />
          <SpinBox name="X" />
          <SpinBox name="Y" />
        </EditorTools>
        <Canvas><SectionDrawing /></Canvas>
        <CanvasFoot><InputToggle type="button">动态输入</InputToggle></CanvasFoot>
      </Page>
      <EditorStatus>
        <div><Mixed mono={false} size={11} text="坐标 (X: -921 Y: 13" /></div>
        <div>
          选择钢筋进行编辑，选择标注进行修改或移动;
          <SizeGrip width="12" height="12" viewBox="0 0 12 12">
            <path d="M8 0h2v2H8zM4 4h2v2H4zM8 4h2v2H8zM0 8h2v2H0zM4 8h2v2H4zM8 8h2v2H8z" fill="#b0b0b0" />
          </SizeGrip>
        </div>
      </EditorStatus>
    </Editor>
  );
}

function Navigation() {
  return (
    <NavPanel>
      <NavHead>
        模块导航栏
        <Spacer />
        <button type="button" aria-label="固定"><Icon name="pin" size={14} /></button>
        <button type="button" aria-label="关闭"><Icon name="close" /></button>
      </NavHead>
      <NavSection type="button">工程设置</NavSection>
      <NavSection type="button">绘图输入</NavSection>
      <NavTools>
        <button type="button" aria-label="展开"><Icon name="plusPlus" /></button>
        <button type="button" aria-label="折叠"><Icon name="minusMinus" /></button>
      </NavTools>
      <Tree>
        <Folder name="常用构件类型" open>
          <Branch $trunk>
            {commonTypes.map(([icon, name], i) => (
              <li key={name}>
                <Row>
                  <Elbow $last={i === commonTypes.length - 1} />
                  <NodeText><Icon name={icon} size={14} /><Mixed text={name} /></NodeText>
                </Row>
              </li>
            ))}
          </Branch>
        </Folder>
        {closedTypes.map((name) => <Folder key={name} name={name} />)}
        <Folder name="自定义" open>
          <Branch>
            {customTypes.map(([icon, name], i) => (
              <li key={name}>
                <Row>
                  <Elbow $last={i === customTypes.length - 1} />
                  <NodeText $picked={i === 1}><Icon name={icon} size={14} /><Mixed text={name} /></NodeText>
                  {i === 1 && <><Icon name="table" size={15} /><NewTag>NEW</NewTag></>}
                </Row>
              </li>
            ))}
          </Branch>
        </Folder>
      </Tree>
      <NavSection type="button">单构件输入</NavSection>
      <NavSection type="button">报表预览</NavSection>
    </NavPanel>
  );
}

function MemberPane() {
  return (
    <ListPane>
      <SearchRow>
        <input aria-label="搜索构件" placeholder="搜索构件..." />
        <button type="button" aria-label="搜索"><Icon name="find" /></button>
      </SearchRow>
      <ListBox>
        <ListRows>
          {members.map((n, i) => (
            <ListItem key={n}>
              <Elbow $last={i === members.length - 1} />
              <ItemFace $on={n === 66}><Icon name="gear" size={13} />ZDYX-{n}</ItemFace>
            </ListItem>
          ))}
        </ListRows>
        <Scroll>
          <Icon name="chevUp" />
          <Track><Thumb /></Track>
          <Icon name="chevDown" />
        </Scroll>
      </ListBox>
    </ListPane>
  );
}

function PropertyPane() {
  return (
    <PropPane>
      <PropTab type="button">属性编辑</PropTab>
      <PropBox>
        <PropTable>
          <colgroup><col /><col /></colgroup>
          <thead><tr><th /><th /></tr></thead>
          <tbody>
            {props.map(([tone, name], i) => (
              <PropRow key={name} $tone={tone}>
                <th scope="row">{i + 1}</th>
                <td>{name}</td>
              </PropRow>
            ))}
          </tbody>
        </PropTable>
      </PropBox>
    </PropPane>
  );
}

function InputMethod() {
  return (
    <ImeBar>
      <ImeLogo width="28" height="27" viewBox="0 0 30 28">
        <path d="M2 5l22-4q2 0 2.500 2L29 22q0 2-2 2.500L8 28q-2 0-2.500-2L1 8q0-2 1-3z" fill="#f4511e" />
        <path d="M22 8c-4-3-13-2-13 2 0 5 14 2 13 7-1 4-10 5-14 2" fill="none" stroke="#fff" strokeWidth="3.500" />
      </ImeLogo>
      <span>中</span>
      <svg width="16" height="16" viewBox="0 0 16 16"><circle cx="4" cy="5" r="2" fill="none" stroke="#1e73c8" strokeWidth="1.400" /><path d="M9 8h4c0 3-1 5-3 6z" fill="#1e73c8" /></svg>
      <svg width="16" height="16" viewBox="0 0 16 16"><rect x="5.500" y="1" width="5" height="9" rx="2.500" fill="#1e73c8" /><path d="M3 7c0 6 10 6 10 0M8 12v3M5 15h6" fill="none" stroke="#1e73c8" strokeWidth="1.500" /></svg>
      <svg width="16" height="16" viewBox="0 0 16 16"><rect y="2" width="16" height="12" rx="1" fill="#1e73c8" /><path d="M2 5h12M2 8h12" stroke="#fff" strokeWidth="1.500" strokeDasharray="2 1" /><path d="M4 11.500h8" stroke="#fff" strokeWidth="1.500" /></svg>
      <svg width="16" height="16" viewBox="0 0 16 16"><circle cx="7" cy="4" r="3" fill="#b4bccb" /><path d="M1 13c0-7 12-7 12 0z" fill="#b4bccb" /><rect x="6" y="9" width="10" height="7" fill="#fff" /><path d="M8 10v5M11 10h4M11 10v5h3v-2.500h-3" stroke="#8e99ad" fill="none" /></svg>
      <svg width="16" height="16" viewBox="0 0 16 16"><path d="M5 1.500c1 2 5 2 6 0l4.500 2.500-1.500 4-2-.5V15H4V7.500L2 8 .5 4z" fill="#1e73c8" /></svg>
      <svg width="16" height="16" viewBox="0 0 16 16"><path d="M15 4l-3 3-2.500-.5L9 4l3-3C8 0 6 3 7 6l-6 6c-1 2 1 4 3 3l6-6c3 1 6-1 5-5z" fill="#1e73c8" /></svg>
    </ImeBar>
  );
}

function Taskbar() {
  return (
    <TaskBar>
      <Start type="button" aria-label="开始">
        <svg width="16" height="16" viewBox="0 0 16 16"><path d="M0 2.200L6.500 1.300v6.200H0zM7.500 1.100L16 0v7.500H7.500zM0 8.500h6.500v6.200L0 13.800zM7.500 8.500H16V16l-8.500-1.200z" fill="#fff" /></svg>
      </Start>
      <TaskSearch>
        <svg width="22" height="22" viewBox="0 0 22 22"><circle cx="11" cy="11" r="9" fill="none" stroke="#fff" strokeWidth="3" /></svg>
        <input aria-label="搜索" placeholder="在这里输入你要搜索的内容" />
        <svg width="14" height="18" viewBox="0 0 14 18"><g fill="none" stroke="#a0a0a0"><rect x="4.500" y="1.500" width="5" height="10" /><path d="M1.500 8v5.500h11V8M7 13.500V17M4 17h6" /></g></svg>
      </TaskSearch>
      <TaskApps>
        <TaskApp type="button" aria-label="旋风">
          <svg width="22" height="22" viewBox="0 0 22 22">
            <g fill="#e4e8ea"><rect x="0" y="1" width="11" height="10" rx="4" /><rect x="11" y="0" width="10" height="11" rx="4" /><rect x="1" y="11" width="10" height="11" rx="4" /><rect x="11" y="11" width="11" height="10" rx="4" /><rect x="7" y="7" width="8" height="8" /></g>
            <path d="M1 11q7 2 10-1Q10 3 13 1M21 11q-7-2-10 1 1 7-2 9" fill="none" stroke="#020b0f" strokeWidth="1.400" />
          </svg>
        </TaskApp>
        <TaskApp type="button" aria-label="提醒">
          <svg width="28" height="28" viewBox="0 0 28 28">
            <path d="M20 9A9 9 0 1021 17M17 11a6 6 0 10-1 9 5 5 0 001-7 3.500 3.500 0 00-5 4" fill="none" stroke="#c9ced1" strokeWidth="1.500" />
            <path d="M15 11c2-1 1-10 6-10s4 9 6 10z" fill="#e8ae14" /><circle cx="21" cy="12" r="1.500" fill="#b07a00" />
          </svg>
        </TaskApp>
        <TaskSep />
        <TaskApp type="button" aria-label="Edge">
          <svg width="22" height="22" viewBox="0 0 22 22"><path d="M1 10C3-3 21-2 21 11v2H8c0 6 7 6 12 3v4C8 26 0 17 5 11c1-2 3-3 5-4-2 1-2 3-2 3h7c0-6-9-7-14 0z" fill="#0f7fe0" /></svg>
        </TaskApp>
        <TaskApp type="button" aria-label="商店">
          <svg width="22" height="24" viewBox="0 0 22 24"><path d="M1 6h20v14l-9 4-11-2z" fill="#fff" /><path d="M7 8V3c1-3 8-3 8 0v4" fill="none" stroke="#fff" strokeWidth="1.500" /><path d="M5 11l4-.6V15H5zM10 10.200l5-.7V15h-5zM5 16h4v4l-4-.5zM10 16h5v5l-5-.8z" fill="#020b0f" /></svg>
        </TaskApp>
        <TaskApp type="button" aria-label="文件">
          <svg width="22" height="20" viewBox="0 0 22 20"><path d="M0 1h8l2 2h11v16H0z" fill="#fbe08e" /><path d="M0 1h8l2 2H0z" fill="#e7b83c" /><path d="M4 19v-8h14v8h-4v-4H8v4z" fill="#36a3e6" /></svg>
        </TaskApp>
        <TaskApp type="button" $state="open" aria-label="浏览器">
          <svg width="24" height="24" viewBox="0 0 24 24">
            <path d="M23 1C19 3 8 0 3 6c-4 7-1 16 8 17 9 0 12-7 9-12-2-3-5-4-8-3 4 0 6 3 4 6-2 4-8 2-8-3 0-7 11-4 15-10z" fill="#2e8fcf" />
            <path d="M2 10c4 5 7 8 12 10l-2 3C5 22 1 17 2 10z" fill="#e0405a" />
          </svg>
        </TaskApp>
        <TaskApp type="button" $state="open" aria-label="安全浏览器">
          <svg width="24" height="24" viewBox="0 0 24 24"><circle cx="12" cy="12" r="10" fill="#5cb82c" stroke="#e9f5e0" /><path d="M7 12.500h10c0-7-10-7-10 0 0 5 7 6 10 2" fill="none" stroke="#fff" strokeWidth="2.500" /><path d="M2 22C-1 16 14 2 23 1c-3 2-4 4-3 7" fill="none" stroke="#3b971a" strokeWidth="1.500" /></svg>
        </TaskApp>
        <TaskApp type="button" $state="active" aria-label="广联达">
          <svg width="24" height="24" viewBox="0 0 24 24">
            <rect width="24" height="24" rx="4" fill="#0a8ff0" />
            <path d="M15 5.500c-2-1-3 .5-3 2V18M5 11.500h13M5 11.500v2M19 11.500c1 4-1 7-7 6.500-3 0-4-2-4-3.500" fill="none" stroke="#fff" strokeWidth="2" />
          </svg>
        </TaskApp>
        <TaskApp type="button" $state="open" aria-label="记事">
          <svg width="24" height="24" viewBox="0 0 24 24"><rect width="24" height="24" rx="2" fill="#f09a1a" /><path d="M3 3h18v18H3z" fill="#ffc24a" /><path d="M4 7l11-1 2 14-11 1z" fill="#fff" /><path d="M7 10h7M7 13h7M8 16h6" stroke="#888" /><path d="M21 2l-8 12-1 4 3-3 7-12z" fill="#9a4a14" /></svg>
        </TaskApp>
      </TaskApps>
      <Cpu>52%<br />CPU使用</Cpu>
      <Tray>
        <svg width="14" height="10" viewBox="0 0 14 10"><path d="M1.500 8L7 2.500 12.500 8" fill="none" stroke="#fff" strokeWidth="1.300" /></svg>
        <svg width="17" height="16" viewBox="0 0 17 16"><path d="M5.500 5.500h9v6h-9zM15 7h1.500v3H15" fill="none" stroke="#fff" /><path d="M7 7h6v3H7zM0 4h4v3L3 8H1L0 7zM1 2v2M3 2v2M2 8v4h3" fill="#fff" stroke="#fff" strokeWidth=".6" /></svg>
        <svg width="15" height="16" viewBox="0 0 15 16"><g fill="none" stroke="#c9ced1"><path d="M2 14C2 8 7 3 14 2M5 14c0-5 4-8 9-9M8 14c0-3 3-5 6-6M10.500 14c0-2 1.500-3 3.500-3" /></g><circle cx="13" cy="13.500" r="1.500" fill="#fff" /></svg>
        <svg width="17" height="16" viewBox="0 0 17 16"><g fill="none" stroke="#fff"><path d="M1 6h2.500L7 2.500v11L3.500 10H1zM9 6c1 1 1 3 0 4M11 4c2 2 2 6 0 8" /><path d="M13.500 2c3 3 3 9 0 12" stroke="#777" /></g></svg>
        <span>中</span>
        <TrayMark width="16" height="16" viewBox="0 0 16 16"><path d="M1 3l12-2 2 12-12 2z" fill="#f4511e" /><path d="M11.500 5C9 3 5 4 5.500 6c.5 3 6 1 5.500 4-.5 2-5 2-7 .5" fill="none" stroke="#fff" strokeWidth="2" /></TrayMark>
      </Tray>
      <Clock>7:50<br />2017/8/13</Clock>
      <Notice type="button" aria-label="通知 6">
        <svg width="28" height="28" viewBox="0 0 28 28">
          <path d="M1 3h16v12H8l-4 4v-4H1z" fill="#fff" /><path d="M4 6h10M4 9h10M4 12h6" stroke="#000" />
          <circle cx="17" cy="18" r="8" fill="#3a3a3a" stroke="#777" />
          <text x="17" y="22" fill="#fff" fontSize="12" fontWeight="bold" fontFamily="Noto Sans, sans-serif" textAnchor="middle">6</text>
        </svg>
      </Notice>
    </TaskBar>
  );
}

export default function App() {
  return (
    <Screen>
      <GlobalStyle />
      <TitleBar>
        <Icon name="app" />
        <TitleText>
          <Mixed mono={false} size={13} text="广联达BIM钢筋算量软件 GGJ2013 - [C:\Users\Administrator.PC-20141127NRHM\Desktop\白龙村-2016-08-25-13-27-07(2166版).GGJ12]" />
        </TitleText>
        <WindowButton type="button" aria-label="最小化"><svg width="10" height="10" viewBox="0 0 10 10"><path d="M0 5.500h10" stroke="#888" /></svg></WindowButton>
        <WindowButton type="button" aria-label="还原"><svg width="10" height="10" viewBox="0 0 10 10"><path d="M.5 2.500h7v7h-7zM2.500 2V.5h7v7H8" fill="none" stroke="#888" /></svg></WindowButton>
        <WindowButton type="button" aria-label="关闭"><svg width="10" height="10" viewBox="0 0 10 10"><path d="M0 0l10 10M10 0L0 10" stroke="#888" /></svg></WindowButton>
      </TitleBar>
      <SpeedBall>69</SpeedBall>

      <MenuRow>
        <Menu>
          {menus.map((m) => <MenuButton type="button" key={m}>{m}</MenuButton>)}
          <ChangeButton type="button"><Icon name="change" />新建变更<Caret /></ChangeButton>
          <MenuButton type="button"><Icon name="robot" />广小二</MenuButton>
        </Menu>
        <News><a href="#news">多边形编辑器的网格尺..</a></News>
        <Account>
          <MenuButton type="button"><Icon name="account" />13907298339</MenuButton>
          <Caret />
          <MenuButton type="button">&nbsp;造价豆:0</MenuButton>
          <MenuButton type="button" aria-label="消息"><Icon name="bell" /></MenuButton>
          <Spacer />
          <More type="button">»</More>
        </Account>
      </MenuRow>

      <ToolRow>
        <Toolbar $basis={150} $start={5}>
          <ToolButton icon="file" />
          <ToolButton icon="open" caret />
          <ToolButton icon="save" />
          <Sep />
          <ToolButton icon="undo" />
          <Caret />
          <Spacer />
          <More type="button">»</More>
        </Toolbar>
        <Toolbar $basis={548} $start={4}>
          <ToolButton icon="paint" text="绘图" />
          <ToolButton icon="sigma" text="汇总计算" />
          <ToolButton icon="cloud" text="云检查" />
          <ToolButton icon="slab" text="平齐板顶" off />
          <ToolButton icon="binoc" text="查找图元" off />
          <ToolButton icon="glasses" text="查看钢筋量" off />
          <ToolButton icon="batch" text="批量选择" off />
          <Spacer />
          <More type="button">»</More>
        </Toolbar>
        <Toolbar $start={0}>
          <Combo $w={60} $boxed>
            <Icon name="rect2d" />
            <select aria-label="视图模式" defaultValue="二维"><option>二维</option></select>
            <Caret color="#555" />
          </Combo>
          <ToolButton icon="cube" text="俯视" off />
          <Caret color="#555" />
          <ToolButton icon="orbit" text="动态观察" off />
          <ToolButton icon="cubes" text="局部三维" off />
          <Sep />
          <ToolButton icon="full" text="全屏" off />
          <ToolButton icon="zoomer" text="缩放" off />
          <Caret color="#555" />
          <ToolButton icon="hand" text="平移" off />
          <Caret color="#555" />
          <ToolButton icon="rotate" text="屏幕旋转" off caret />
          <Sep />
          <ToolButton icon="floors" text="选择楼层" off />
          <Spacer />
          <More type="button">»</More>
        </Toolbar>
      </ToolRow>

      <Body>
        <Navigation />
        <Work>
          <WorkTools>
            <Toolbar $start={4}>
              <ToolButton icon="create" text="新建" caret />
              <ToolButton icon="del" text="删除" />
              <ToolButton icon="copy" text="复制" />
              <ToolButton icon="rename" text="重命名" />
              <Sep />
              <FloorLabel>
                楼层
                <Combo $w={61}>
                  <select defaultValue="首层"><option>首层</option></select>
                  <Caret />
                </Combo>
              </FloorLabel>
              <Sep />
              <ToolButton icon="sort" text="排序" caret />
              <ToolButton icon="filter" text="过滤" caret />
              <Sep />
              <ToolButton icon="copyFrom" text="从其他楼层复制构件" />
              <ToolButton icon="copyTo" text="复制构件到其他楼层" />
              <Sep />
              <ToolButton text="查找" caret pad />
              <Sep />
              <ToolButton icon="up" text="上移" />
              <ToolButton icon="down" text="下移" off />
            </Toolbar>
          </WorkTools>
          <WorkSplit>
            <MemberPane />
            <PropertyPane />
          </WorkSplit>
        </Work>
      </Body>

      <AppStatus>
        <StatusCell $w={148} />
        <StatusCell $w={78}><Mixed text="层高:4.5m" /></StatusCell>
        <StatusCell $w={98}><Mixed text="底标高:-0.03m" /></StatusCell>
        <StatusCell $w={48}><Mixed text="0" /></StatusCell>
        <StatusCell>名称在当前层当前构件类型下不允许重名</StatusCell>
      </AppStatus>
      <Taskbar />

      <SectionEditor />
      <GridDialog />
      <InputMethod />
    </Screen>
  );
}
